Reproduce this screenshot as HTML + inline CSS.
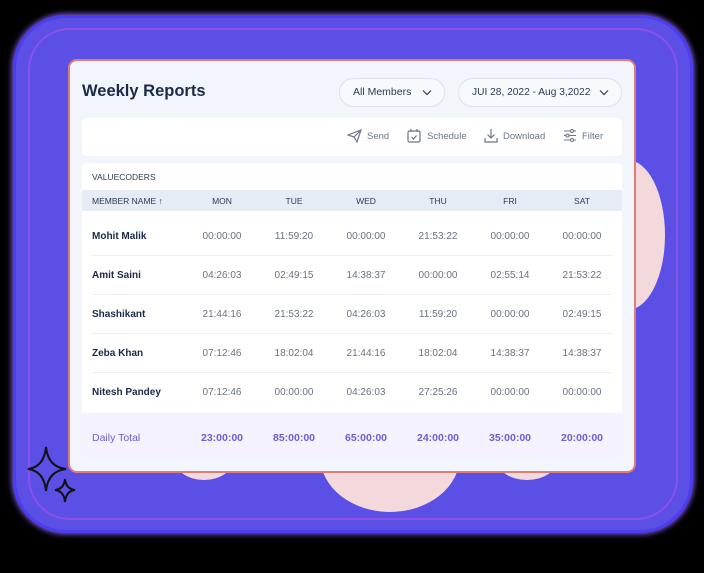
<!DOCTYPE html>
<html><head><meta charset="utf-8"><style>
*{margin:0;padding:0;box-sizing:border-box}
body{width:704px;height:573px;background:#000;position:relative;overflow:hidden;font-family:"Liberation Sans",sans-serif}
.glow{position:absolute;left:16px;top:18px;width:674px;height:512px;border-radius:50px;background:#5b4fe6;box-shadow:0 0 0 3px #4a3ef0,0 0 6px 4px #8a5cf0}
.glow2{position:absolute;left:28px;top:28px;width:650px;height:492px;border-radius:42px;border:2px solid rgba(200,80,240,.45)}
.blob{position:absolute;background:#f3d9dc;border-radius:50%}
.card{position:absolute;left:68px;top:59px;width:568px;height:414px;background:#f2f5fb;border:2px solid #e07c78;border-radius:9px}
.a{position:absolute}
.title{left:82px;top:82px;font-size:16.5px;font-weight:bold;color:#1b2a48}
.dd{top:78px;height:29px;border:1px solid #dde2ec;border-radius:15px;background:#f7f9fc;font-size:10.5px;color:#2d3a55;line-height:27px;padding-left:13px}
.dd svg{position:absolute;right:12px;top:10px}
.tb{left:82px;top:118px;width:540px;height:38px;background:#fff;border-radius:5px}
.tbi{top:131px;font-size:9.5px;color:#6b7588}
.tbl{left:82px;top:163px;width:540px;height:297px;background:#fff;border-radius:5px;overflow:hidden}
.hd{position:absolute;left:0;top:27px;width:540px;height:21px;background:#e6ecf5}
.tot{position:absolute;left:0;top:250px;width:540px;height:47px;background:#f3f2fd}
.c{position:absolute;width:72px;text-align:center;font-size:10px;color:#6a7180}
.h{font-size:8.5px;color:#2c3a55}
.n{position:absolute;left:10px;font-size:10px;font-weight:bold;color:#1b2a48}
.t{color:#6e5fcf;font-size:10.5px;font-weight:bold}
.line{position:absolute;left:10px;width:520px;height:1px;background:#edf0f5}
</style></head><body>
<div class="glow"></div><div class="glow2"></div>
<div class="blob" style="left:590px;top:160px;width:75px;height:150px"></div>
<div class="blob" style="left:320px;top:400px;width:140px;height:112px"></div>
<div class="blob" style="left:175px;top:440px;width:58px;height:40px"></div>
<div class="blob" style="left:497px;top:440px;width:60px;height:40px"></div>
<svg class="a" style="left:26px;top:445px" width="54" height="62" viewBox="0 0 54 62"><path d="M20 2 Q22 22 40 24 Q22 26 20 46 Q18 26 2 24 Q18 22 20 2Z" fill="none" stroke="#111" stroke-width="2"/><path d="M39 34 Q40 44 49 45 Q40 46 39 57 Q38 46 29 45 Q38 44 39 34Z" fill="none" stroke="#111" stroke-width="2"/></svg>
<div class="card"></div>
<div class="a title">Weekly Reports</div>
<div class="a dd" style="left:339px;width:106px">All Members<svg width="10" height="7" viewBox="0 0 10 7"><path d="M1 1.5l4 4 4-4" fill="none" stroke="#2d3a55" stroke-width="1.2"/></svg></div>
<div class="a dd" style="left:458px;width:164px;font-size:10.2px">JUI 28, 2022 - Aug 3,2022<svg width="10" height="7" viewBox="0 0 10 7"><path d="M1 1.5l4 4 4-4" fill="none" stroke="#2d3a55" stroke-width="1.2"/></svg></div>
<div class="a tb"></div>
<svg class="a" style="left:347px;top:129px" width="15" height="14" viewBox="0 0 15 14"><path d="M1 6 L14 1 L10 13 L7 8 Z M7 8 L14 1" fill="none" stroke="#6b7588" stroke-width="1.2"/></svg>
<div class="a tbi" style="left:367px">Send</div>
<svg class="a" style="left:407px;top:128px" width="14" height="15" viewBox="0 0 14 15"><rect x="1" y="3" width="12" height="11" rx="1.5" fill="none" stroke="#6b7588" stroke-width="1.2"/><path d="M4 1v3M10 1v3M4.5 9l2 2 3-3.5" fill="none" stroke="#6b7588" stroke-width="1.2"/></svg>
<div class="a tbi" style="left:427px">Schedule</div>
<svg class="a" style="left:484px;top:128px" width="14" height="15" viewBox="0 0 14 15"><path d="M7 1v9M3.5 6.5 7 10l3.5-3.5M1 10v4h12v-4" fill="none" stroke="#6b7588" stroke-width="1.2"/></svg>
<div class="a tbi" style="left:503px">Download</div>
<svg class="a" style="left:563px;top:129px" width="14" height="13" viewBox="0 0 14 13"><path d="M1 2h12M1 6.5h12M1 11h12" stroke="#6b7588" stroke-width="1.1"/><circle cx="9" cy="2" r="1.5" fill="#fff" stroke="#6b7588"/><circle cx="4.5" cy="6.5" r="1.5" fill="#fff" stroke="#6b7588"/><circle cx="9" cy="11" r="1.5" fill="#fff" stroke="#6b7588"/></svg>
<div class="a tbi" style="left:582px">Filter</div>
<div class="a tbl">
<div style="position:absolute;left:10px;top:9px;font-size:8.5px;color:#2c3a55">VALUECODERS</div>
<div class="hd"></div>
<div style="position:absolute;left:10px;top:33px;font-size:8.5px;color:#2c3a55">MEMBER NAME ↑</div>
<div class="c h" style="left:104px;top:33px">MON</div><div class="c h" style="left:176px;top:33px">TUE</div><div class="c h" style="left:248px;top:33px">WED</div><div class="c h" style="left:320px;top:33px">THU</div><div class="c h" style="left:392px;top:33px">FRI</div><div class="c h" style="left:464px;top:33px">SAT</div>

<div class="n" style="top:68px">Mohit Malik</div>
<div class="c" style="left:104px;top:68px">00:00:00</div><div class="c" style="left:176px;top:68px">11:59:20</div><div class="c" style="left:248px;top:68px">00:00:00</div><div class="c" style="left:320px;top:68px">21:53:22</div><div class="c" style="left:392px;top:68px">00:00:00</div><div class="c" style="left:464px;top:68px">00:00:00</div>
<div class="line" style="top:92px"></div>
<div class="n" style="top:107px">Amit Saini</div>
<div class="c" style="left:104px;top:107px">04:26:03</div><div class="c" style="left:176px;top:107px">02:49:15</div><div class="c" style="left:248px;top:107px">14:38:37</div><div class="c" style="left:320px;top:107px">00:00:00</div><div class="c" style="left:392px;top:107px">02:55:14</div><div class="c" style="left:464px;top:107px">21:53:22</div>
<div class="line" style="top:131px"></div>
<div class="n" style="top:146px">Shashikant</div>
<div class="c" style="left:104px;top:146px">21:44:16</div><div class="c" style="left:176px;top:146px">21:53:22</div><div class="c" style="left:248px;top:146px">04:26:03</div><div class="c" style="left:320px;top:146px">11:59:20</div><div class="c" style="left:392px;top:146px">00:00:00</div><div class="c" style="left:464px;top:146px">02:49:15</div>
<div class="line" style="top:170px"></div>
<div class="n" style="top:185px">Zeba Khan</div>
<div class="c" style="left:104px;top:185px">07:12:46</div><div class="c" style="left:176px;top:185px">18:02:04</div><div class="c" style="left:248px;top:185px">21:44:16</div><div class="c" style="left:320px;top:185px">18:02:04</div><div class="c" style="left:392px;top:185px">14:38:37</div><div class="c" style="left:464px;top:185px">14:38:37</div>
<div class="line" style="top:209px"></div>
<div class="n" style="top:224px">Nitesh Pandey</div>
<div class="c" style="left:104px;top:224px">07:12:46</div><div class="c" style="left:176px;top:224px">00:00:00</div><div class="c" style="left:248px;top:224px">04:26:03</div><div class="c" style="left:320px;top:224px">27:25:26</div><div class="c" style="left:392px;top:224px">00:00:00</div><div class="c" style="left:464px;top:224px">00:00:00</div>
<div class="tot"></div>
<div style="position:absolute;left:10px;top:269px;font-size:10.5px;color:#6e5fcf">Daily Total</div>
<div class="c t" style="left:104px;top:269px">23:00:00</div><div class="c t" style="left:176px;top:269px">85:00:00</div><div class="c t" style="left:248px;top:269px">65:00:00</div><div class="c t" style="left:320px;top:269px">24:00:00</div><div class="c t" style="left:392px;top:269px">35:00:00</div><div class="c t" style="left:464px;top:269px">20:00:00</div>
</div>
</body></html>
